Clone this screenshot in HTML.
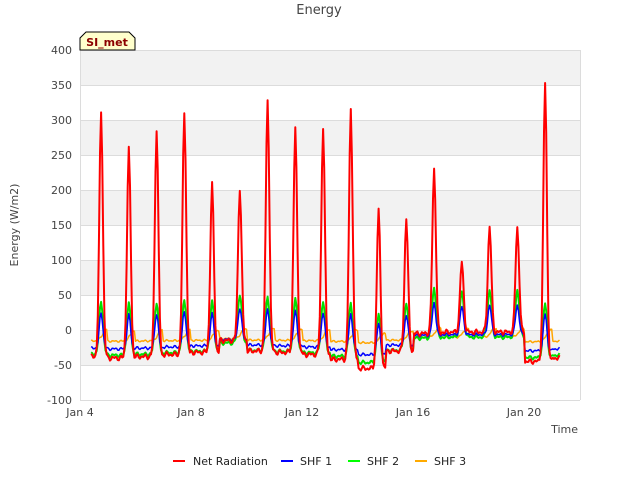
<!DOCTYPE html><html><head><style>body{margin:0;background:#fff;width:640px;height:480px;overflow:hidden;font-family:"DejaVu Sans","Liberation Sans",sans-serif}</style></head><body>
<svg id="s" width="640" height="480" xmlns="http://www.w3.org/2000/svg" font-family="DejaVu Sans, Liberation Sans, sans-serif">
<rect x="80" y="50" width="500" height="350" fill="#f2f2f2"/>
<g fill="#fff"><rect x="80" y="85" width="500" height="35"/><rect x="80" y="155" width="500" height="35"/><rect x="80" y="225" width="500" height="35"/><rect x="80" y="295" width="500" height="35"/><rect x="80" y="365" width="500" height="35"/></g>
<g stroke="#dcdcdc" stroke-width="1"><line x1="80" x2="580" y1="50.5" y2="50.5"/><line x1="80" x2="580" y1="85.5" y2="85.5"/><line x1="80" x2="580" y1="120.5" y2="120.5"/><line x1="80" x2="580" y1="155.5" y2="155.5"/><line x1="80" x2="580" y1="190.5" y2="190.5"/><line x1="80" x2="580" y1="225.5" y2="225.5"/><line x1="80" x2="580" y1="260.5" y2="260.5"/><line x1="80" x2="580" y1="295.5" y2="295.5"/><line x1="80" x2="580" y1="330.5" y2="330.5"/><line x1="80" x2="580" y1="365.5" y2="365.5"/><line x1="80" x2="580" y1="400.5" y2="400.5"/><line x1="80.5" x2="80.5" y1="50" y2="400"/><line x1="580.5" x2="580.5" y1="50" y2="400"/></g>
<g font-size="11" fill="#444" text-anchor="end"><text x="72" y="54">400</text><text x="72" y="89">350</text><text x="72" y="124">300</text><text x="72" y="159">250</text><text x="72" y="194">200</text><text x="72" y="229">150</text><text x="72" y="264">100</text><text x="72" y="299">50</text><text x="72" y="334">0</text><text x="72" y="369">-50</text><text x="72" y="404">-100</text></g>
<g font-size="11" fill="#444" text-anchor="middle"><text x="80" y="416">Jan 4</text><text x="191" y="416">Jan 8</text><text x="302" y="416">Jan 12</text><text x="413" y="416">Jan 16</text><text x="524" y="416">Jan 20</text></g>
<text x="578" y="433" font-size="11" fill="#444" text-anchor="end">Time</text>
<text x="18" y="225" font-size="11" fill="#444" text-anchor="middle" transform="rotate(-90 18 225)">Energy (W/m2)</text>
<text x="319" y="14" font-size="13" fill="#444" text-anchor="middle">Energy</text>
<g id="d"></g>
<path d="M80,50 V38 L86,32 H129 L135,38 V50 Z" fill="#ffffcc" stroke="#000"/>
<text x="107" y="46" font-size="11" font-weight="bold" fill="#8b0000" text-anchor="middle">SI_met</text>
<g font-size="11" fill="#222"><line x1="173" x2="185" y1="461" y2="461" stroke="#f00" stroke-width="2"/><text x="193" y="465">Net Radiation</text>
<line x1="281" x2="293" y1="461" y2="461" stroke="#00f" stroke-width="2"/><text x="300" y="465">SHF 1</text>
<line x1="348" x2="360" y1="461" y2="461" stroke="#0f0" stroke-width="2"/><text x="367" y="465">SHF 2</text>
<line x1="415" x2="427" y1="461" y2="461" stroke="#fa0" stroke-width="2"/><text x="434" y="465">SHF 3</text></g>
</svg>
<script>
var pk=[312,258,287,310,208,202,328,287,290,315,172,160,230,97,148,147,353];
var bs=[-38,-40,-38,-35,-32,-15,-30,-32,-35,-42,-55,-30,-5,-3,-3,-3,-45,-40];
var X=d=>80+(d-4)*27.75,Y=v=>330-v*0.7;
function b(i){return bs[Math.max(0,Math.min(bs.length-1,i))];}
function line(bk,amp,col,w,off,wd,nz){var p=[];for(var d=4.4;d<=21.3;d+=0.04){var i=Math.floor(d-4),f=d-4-i-0.76-off,v=bk(i,d)+(i>=0&&i<pk.length?amp(pk[i],i)*Math.exp(-f*f/(wd*wd)):0);v+=(Math.sin(d*23.1)+Math.sin(d*41.7))*nz;p.push(X(d).toFixed(1)+","+Y(v).toFixed(1));}
var e=document.createElementNS("http://www.w3.org/2000/svg","polyline");e.setAttribute("points",p.join(" "));e.setAttribute("fill","none");e.setAttribute("stroke",col);e.setAttribute("stroke-width",w);e.setAttribute("stroke-linejoin","round");document.getElementById("d").appendChild(e);}
line(i=>-10+b(i)*0.15,p=>10+p*0.02,"#ffa500",1.5,0.2,0.2,0.8);
line(i=>-8+b(i)*0.7,p=>60+p*0.05,"#00e000",2,0,0.1,1.5);
line(i=>-5+b(i)*0.55,p=>35+p*0.05,"#0000ff",1.5,0,0.09,1.2);
line(i=>b(i),(p,i)=>p-b(i),"#ff0000",2,0,0.09,2);
</script>
</body></html>
